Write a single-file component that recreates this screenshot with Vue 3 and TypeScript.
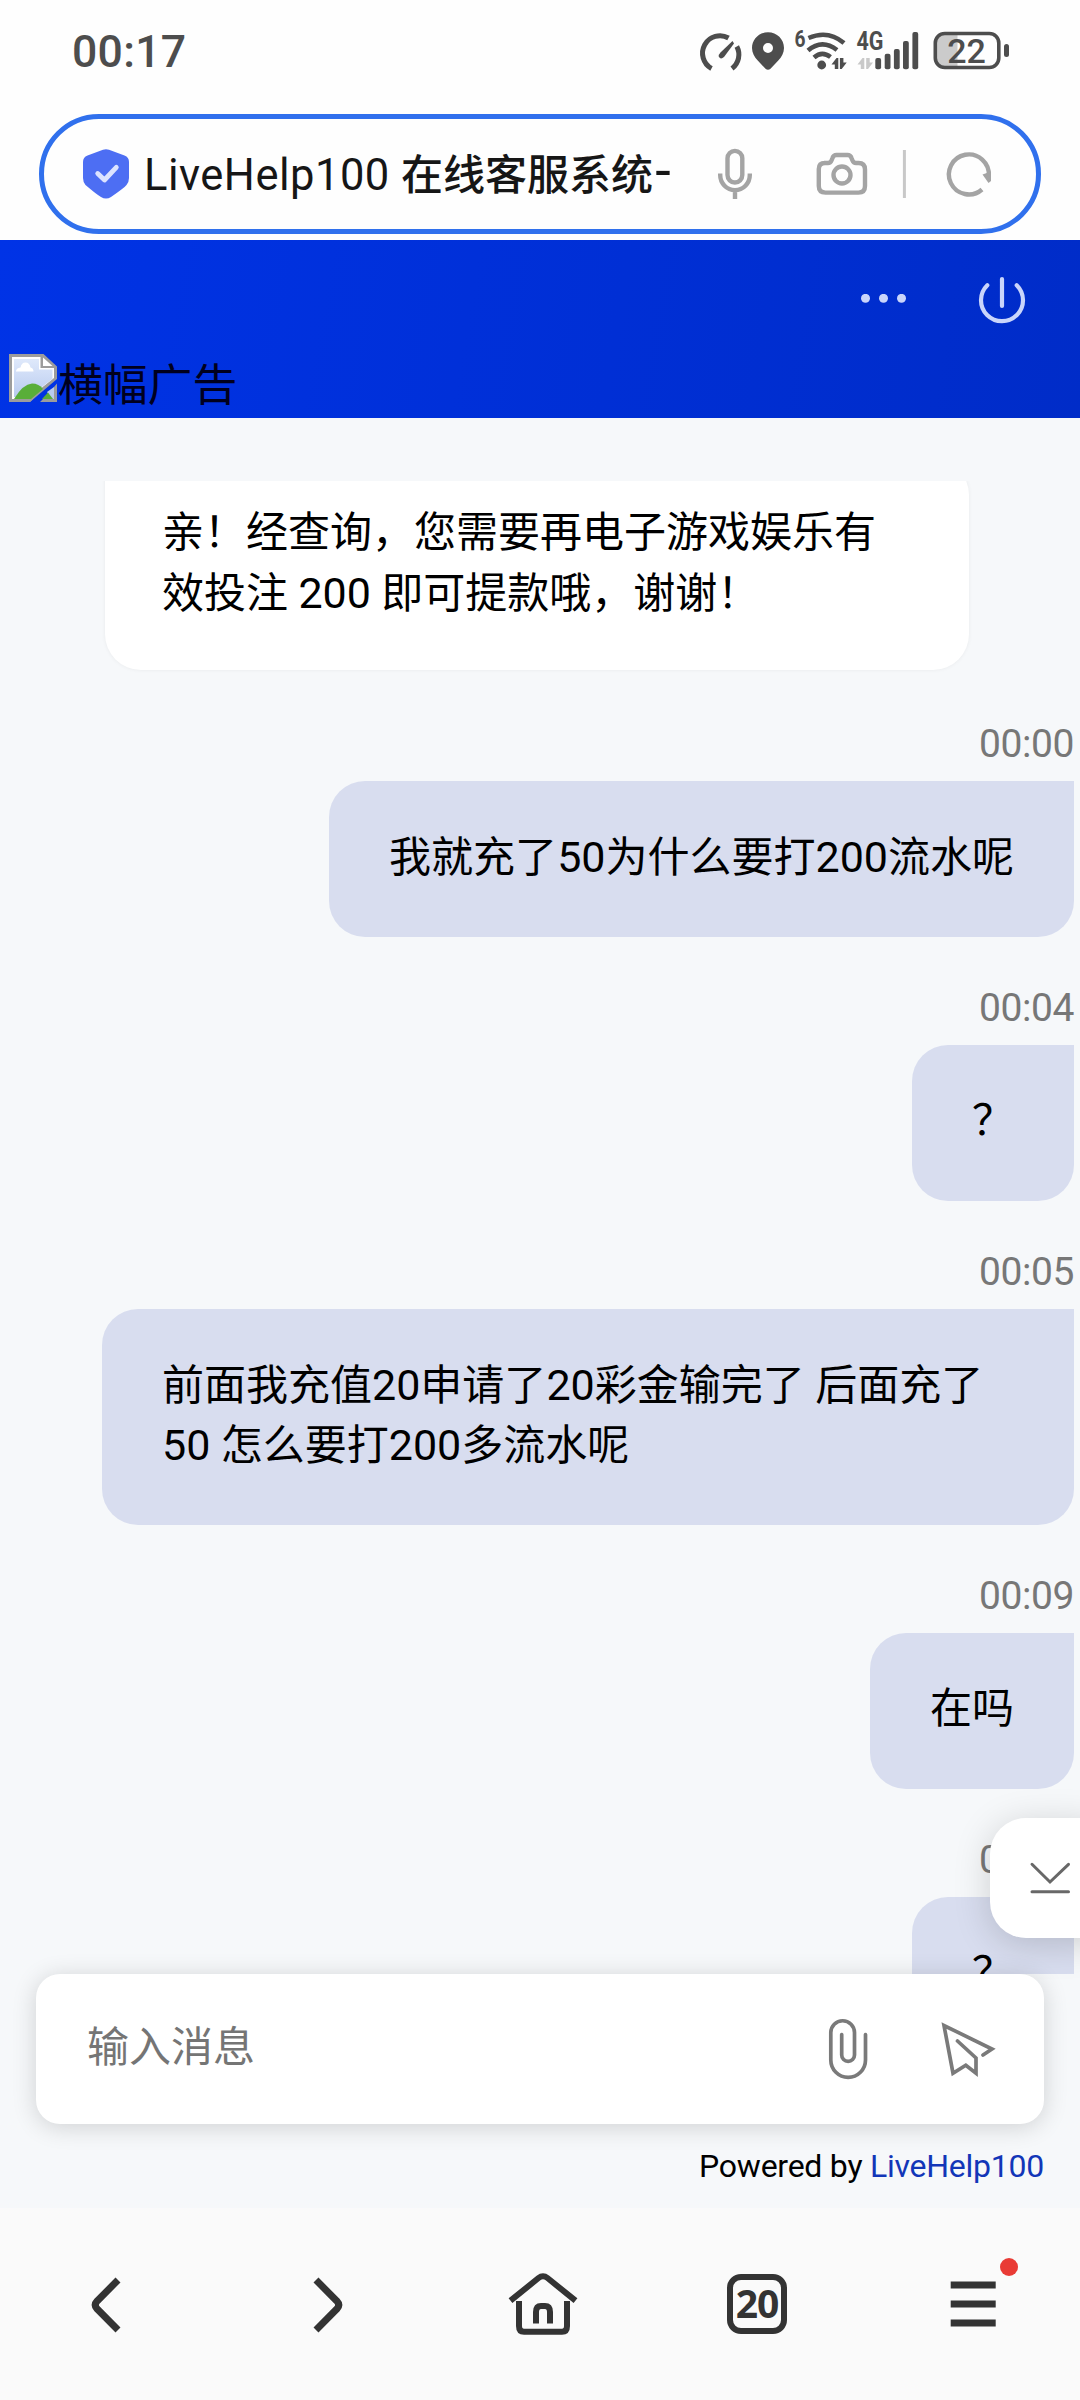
<script setup lang="ts">
interface Part {
  text: string
  latin?: boolean
}
interface Message {
  time?: string
  own: boolean
  lines: Part[][]
}

const split = (line: string): Part[] =>
  (line.match(/[0-9]+|[^0-9]+/g) ?? []).map((text) => ({ text, latin: /^[0-9]/.test(text) }))

const messages: Message[] = [
  { own: false, lines: ['亲！经查询，您需要再电子游戏娱乐有', '效投注 200 即可提款哦，谢谢！'].map(split) },
  { time: '00:00', own: true, lines: ['我就充了50为什么要打200流水呢'].map(split) },
  { time: '00:04', own: true, lines: ['？'].map(split) },
  { time: '00:05', own: true, lines: ['前面我充值20申请了20彩金输完了 后面充了', '50 怎么要打200多流水呢'].map(split) },
  { time: '00:09', own: true, lines: ['在吗'].map(split) },
  { time: '00:09', own: true, lines: ['？'].map(split) },
]
</script>

<template>
  <div class="screen">
    <div class="status">
      <span class="clock">00:17</span>
      <div class="status-icons">
        <svg width="48" height="48" viewBox="697 26 48 48" fill="none" stroke="#4d4d4d" stroke-width="5">
          <path d="M710.5 68.5A17.3 17.3 0 0 1 727.5 38" />
          <path d="M735.8 46.5A17.3 17.3 0 0 1 731 68.5" />
          <path d="M731.5 41 L733 43.5 L723 57 Q719.5 60 717.8 56.5 Q717.5 54.5 719.5 52.5 Z" fill="#4d4d4d" stroke="none" />
        </svg>
        <svg width="44" height="48" viewBox="746 26 44 48">
          <path fill="#4d4d4d" fill-rule="evenodd" d="M768 32.3c9 0 16 7 16 15.700c0 5-2.500 9-5.500 12.200l-8 8.600q-2.500 2-5 0l-8-8.600c-3-3.200-5.500-7.200-5.500-12.200c0-8.700 7-15.700 16-15.700zM768 43a5 5 0 1 0 0 10a5 5 0 1 0 0-10z" />
        </svg>
        <svg width="62" height="48" viewBox="790 26 62 48">
          <text x="794.500" y="46.500" class="tiny" textLength="11" lengthAdjust="spacingAndGlyphs" font-size="23">6</text>
          <g fill="none" stroke="#4d4d4d" stroke-width="4.600">
            <path d="M808.500 38Q828 29.500 844 43" />
            <path d="M808 50.500Q822 38.500 837 50" />
            <path d="M814 57.500Q822 50.500 830.500 57" />
          </g>
          <circle cx="821.700" cy="65" r="4.400" fill="#4d4d4d" />
          <path fill="#4d4d4d" d="M831.500 64.500l5-6.500h1.800v11h-3.500v-4.500zM846.700 62.500l-5 6.500h-1.800v-11h3.500v4.500z" />
        </svg>
        <svg width="78" height="48" viewBox="852 26 78 48" fill="#4d4d4d">
          <text x="856.500" y="50" class="tiny" textLength="27" lengthAdjust="spacingAndGlyphs" font-size="25">4G</text>
          <path fill="#c9c9c9" d="M857.500 64.500l5-6.500h1.800v11h-3.500v-4.500zM873 62.500l-5 6.500h-1.800v-11h3.500v4.500z" />
          <rect x="875.300" y="58" width="5.800" height="11.300" rx="2" />
          <rect x="884.700" y="53.700" width="5.800" height="15.600" rx="2" />
          <rect x="893.900" y="49" width="5.800" height="20.300" rx="2" />
          <rect x="903" y="41" width="5.800" height="28.300" rx="2" />
          <rect x="912.400" y="32" width="5.800" height="37.300" rx="2" />
        </svg>
        <svg width="84" height="48" viewBox="930 26 84 48">
          <path fill="#cbcbcb" d="M957.500 34h-12q-9 0-9 9v15q0 9 9 9h12z" />
          <rect x="935.300" y="33.500" width="63.500" height="34" rx="9.500" fill="none" stroke="#4d4d4d" stroke-width="3.600" />
          <rect x="1004" y="44" width="5" height="13" rx="2.500" fill="#4d4d4d" />
          <text x="966.500" y="62.500" text-anchor="middle" class="pct">22</text>
        </svg>
      </div>
    </div>

    <div class="address">
      <svg width="46" height="50" viewBox="0 0 46 50">
        <path fill="#4d6ef3" d="M20 .8q3-1.200 6 0L41.500 6.500Q46 8.300 46 13V29q0 4-2.500 7T28 48q-5 3-10 0T2.500 36Q0 33 0 29V13Q0 8.300 4.500 6.500Z" />
        <path d="M14.700 24.500L21.500 31L33.300 18.300" fill="none" stroke="#dce3ff" stroke-width="4.800" stroke-linecap="round" stroke-linejoin="round" />
      </svg>
      <div class="title"><span class="title-latin">LiveHelp100 </span>在线客服系统<span class="dash">-</span></div>
      <svg width="320" height="60" viewBox="700 144 320 60" fill="none" stroke="#a4a4a4" stroke-width="4.400">
        <rect x="727.500" y="150.900" width="14.800" height="31.600" rx="7.400" />
        <path d="M720.200 173.500V175A14.700 15 0 0 0 749.800 175V173.500M735 190V199" />
        <path d="M824 163H828Q830.500 163 831.500 160.500L832.500 158Q833.500 155 836.500 155H847.500Q850.500 155 851.500 158L852.500 160.500Q853.500 163 856 163H858.500Q865 163 865 169.500V186Q865 192.600 858.500 192.600H825.500Q818.800 192.600 818.800 186V169Q818.800 163 825 163Z" />
        <circle cx="842" cy="175" r="8.500" />
        <path d="M904.400 150V198" stroke="#c8c8c8" stroke-width="3" />
        <path d="M982 189.500A20 20 0 1 1 988.800 176" />
        <path d="M982.500 174.500L991 171.500V181L988.500 183Z" fill="#a4a4a4" stroke="none" />
      </svg>
    </div>

    <header class="banner">
      <div class="actions">
        <svg width="46" height="12" viewBox="0 0 46 12" fill="#c9d5fb">
          <circle v-for="n in 3" :key="n" :cx="n * 18 - 13.5" cy="4.300" r="4.500" />
        </svg>
        <svg width="48" height="50" viewBox="978 275 48 50" fill="none" stroke="#c9d5fb" stroke-width="4.200" stroke-linecap="round">
          <path d="M987.300 285.200A21 21 0 1 0 1016.700 285.200M1002 279V306" />
        </svg>
      </div>
      <div class="ad">
        <svg width="48" height="48" viewBox="0 0 48 48">
          <defs>
            <linearGradient id="sky" x1="0" y1="0" x2="0" y2="1">
              <stop offset="0" stop-color="#dfe9fb" />
              <stop offset="1" stop-color="#b9cbef" />
            </linearGradient>
          </defs>
          <path fill="#9c9c9c" d="M0 0H34.500L48 12.500V25L21 48H0Z" />
          <path fill="#fff" d="M3 3H31.500V14H45V24L18.500 45H3Z" />
          <path fill="url(#sky)" d="M5 5H30V15.500H43.500V25L19.500 43H5Z" />
          <path fill="#fff" d="M34 3.500L43.500 12H34ZM7 17.500q0-3.500 4.500-4q1-5 5-5t5 5q3 .5 3 4z" />
          <path fill="#59ae39" d="M5 45Q14 30 23 29.500Q30 29.500 34 35L22 45Z" />
          <path fill="#9c9c9c" d="M0 45H24L21 48H0ZM31 48L34 45H45V33L48 29.500V48Z" />
          <path fill="#b9cbef" d="M45 33V45H43L38 38Z" />
          <path fill="#59ae39" d="M39 38.500L44 45H33Z" />
        </svg>
        <span class="alt">横幅广告</span>
      </div>
    </header>

    <main class="chat">
      <div class="scroller">
        <div v-for="(m, i) in messages" :key="i" class="message" :class="{ own: m.own }">
          <div v-if="m.time" class="time">{{ m.time }}</div>
          <div class="bubble">
            <div v-for="(line, l) in m.lines" :key="l" class="line"><span v-for="(p, k) in line" :key="k" :class="{ num: p.latin }">{{ p.text }}</span></div>
          </div>
        </div>
      </div>
      <button class="to-bottom">
        <svg width="42" height="36" viewBox="1029 1860 42 36" fill="none" stroke="#686868" stroke-width="3" stroke-linecap="round">
          <path d="M1032 1864.300L1050 1882L1068.500 1864.300M1032 1891.800H1068.500" />
        </svg>
      </button>
    </main>

    <div class="composer">
      <span class="placeholder">输入消息</span>
      <svg width="42" height="64" viewBox="0 0 42 64" fill="none" stroke="#7a7a7a" stroke-width="3.700" stroke-linecap="round">
        <path d="M38.500 17.500V43A17.350 17.350 0 0 1 3.800 43V15.600A11.850 11.850 0 0 1 27.500 15.600V38A6.400 6.400 0 0 1 14.700 38V17.500" />
      </svg>
      <svg class="send" width="58" height="58" viewBox="0 0 58 58" fill="none" stroke="#7a7a7a" stroke-width="3.700" stroke-linecap="round">
        <path d="M44 35L53 29L5 5.500L14 53.200L26.800 45.200L37 53.200V38L18.500 21" />
      </svg>
    </div>
    <div class="powered">Powered by <span class="link">LiveHelp100</span></div>

    <nav class="toolbar">
      <div class="tool">
        <svg width="120" height="100" viewBox="48 54 120 100" fill="none" stroke="#333" stroke-width="7">
          <path d="M118 80L97 101.200Q93.500 105 97 108.800L118 130" />
        </svg>
      </div>
      <div class="tool">
        <svg width="120" height="100" viewBox="264 54 120 100" fill="none" stroke="#333" stroke-width="7">
          <path d="M316 80L337 101.200Q340.500 105 337 108.800L316 130" />
        </svg>
      </div>
      <div class="tool">
        <svg width="120" height="100" viewBox="480 54 120 100" fill="none" stroke="#333" stroke-width="6">
          <path d="M510.500 100.700L538.500 78Q543 74.500 547.500 78L575.500 100.700" />
          <path d="M519 101V126Q519 131.800 524 131.800H562Q567 131.800 567 126V101" />
          <path d="M536 123.500V112Q536 106 541 106H545Q550 106 550 112V123.500" />
        </svg>
      </div>
      <div class="tool"><div class="tabs">20</div></div>
      <div class="tool">
        <svg width="120" height="100" viewBox="912 54 120 100">
          <path d="M950.700 85H995.700M950.700 104H995.700M950.700 123H995.700" stroke="#333" stroke-width="7" />
          <circle cx="1009" cy="67" r="9" fill="#e93b35" />
        </svg>
      </div>
    </nav>
  </div>
</template>

<style>
body {
  margin: 0;
}
</style>

<style scoped>
.screen {
  width: 1080px;
  height: 2400px;
  display: flex;
  flex-direction: column;
  overflow: hidden;
  background: #f6f8fa;
  font-family: Roboto, "Noto Sans CJK SC", sans-serif;
  color: #000;
}
.status {
  height: 114px;
  flex: none;
  display: flex;
  justify-content: space-between;
  align-items: flex-start;
  padding: 26px 66px 0 72px;
  box-sizing: border-box;
  background: #fefefe;
}
.clock {
  font-size: 44.5px;
  line-height: 52px;
  font-weight: 500;
  letter-spacing: 0.3px;
  color: #4d4d4d;
}
.status-icons {
  display: flex;
}
.tiny {
  font-family: Roboto, sans-serif;
  font-weight: 700;
  fill: #4d4d4d;
}
.pct {
  font-family: Roboto, sans-serif;
  font-weight: 500;
  font-size: 34px;
  fill: #4d4d4d;
}
.address {
  height: 120px;
  flex: none;
  margin: 0 39px;
  box-sizing: border-box;
  border: 5px solid #3070ed;
  border-radius: 60px;
  display: flex;
  align-items: center;
  padding-left: 39px;
  background: #fefefe;
  box-shadow: 0 0 0 60px #fefefe;
  clip-path: inset(0 -39px -6px -39px);
}
.title {
  width: 556px;
  padding: 3px 0 0 15px;
  flex: none;
  white-space: nowrap;
  font-size: 42px;
  line-height: 60px;
  color: #161616;
  font-weight: 500;
}
.title-latin {
  font-size: 43.5px;
  font-weight: 450;
  letter-spacing: 0.5px;
}
.dash {
  margin-left: 2px;
  font-size: 56px;
  line-height: 40px;
  font-weight: 400;
}
.banner {
  height: 178px;
  flex: none;
  margin-top: 6px;
  display: flex;
  flex-direction: column;
  justify-content: space-between;
  padding: 35px 54px 6px 9px;
  box-sizing: border-box;
  background: linear-gradient(100deg, #0033e6, #002cc8);
}
.actions {
  display: flex;
  justify-content: flex-end;
  align-items: center;
  gap: 71px;
}
.ad {
  display: flex;
  align-items: center;
  height: 60px;
  gap: 1px;
}
.ad svg {
  margin-top: -8px;
}
.alt {
  font-family: "Noto Sans CJK SC", sans-serif;
  font-size: 44.8px;
  line-height: 60px;
  color: #00001e;
}
.chat {
  position: relative;
  height: 1556px;
  flex: none;
  padding-top: 63px;
  box-sizing: border-box;
}
.scroller {
  height: 1493px;
  overflow: hidden;
}
.message {
  display: flex;
  flex-direction: column;
  align-items: flex-start;
  padding-left: 105px;
}
.message:first-child {
  margin-top: -22px;
  padding-bottom: 3px;
}
.message.own {
  align-items: flex-end;
  padding: 41px 6px 0 0;
}
.bubble {
  width: 864px;
  box-sizing: border-box;
  padding: 44px 57px 47px;
  background: #fff;
  border-radius: 0 36px 36px 36px;
  box-shadow: 0 0 4px rgba(0, 0, 0, 0.06);
  font-size: 42px;
}
.own .bubble {
  width: auto;
  padding: 46px 60px 50px;
  background: #d8ddef;
  border-radius: 36px 0 36px 36px;
  box-shadow: none;
}
.own:nth-child(4) .bubble {
  width: 972px;
}
.line {
  height: 60px;
  line-height: 60px;
  white-space: nowrap;
}
.num {
  font-size: 43px;
}
.time {
  height: 60px;
  line-height: 60px;
  margin-bottom: 7px;
  font-size: 39px;
  letter-spacing: -0.4px;
  color: #777;
}
.to-bottom {
  position: absolute;
  right: -36px;
  top: 1400px;
  width: 126px;
  height: 120px;
  padding: 0 0 0 39px;
  border: 0;
  border-radius: 36px;
  background: #fff;
  box-shadow: 0 6px 36px rgba(0, 0, 0, 0.17);
  display: flex;
  align-items: center;
}
.composer {
  position: relative;
  height: 150px;
  flex: none;
  margin: 0 36px;
  padding: 0 47px 0 51px;
  box-sizing: border-box;
  display: flex;
  align-items: center;
  background: #fff;
  border-radius: 24px;
  box-shadow: 0 3px 24px rgba(0, 0, 0, 0.16);
}
.placeholder {
  flex: 1;
  font-size: 42px;
  line-height: 60px;
  margin-top: -3px;
  color: #757575;
}
.send {
  margin-left: 70px;
}
.powered {
  height: 84px;
  flex: none;
  padding-right: 36px;
  line-height: 85px;
  text-align: right;
  font-size: 32px;
  letter-spacing: -0.25px;
}
.link {
  color: #1236b8;
}
.toolbar {
  height: 192px;
  flex: none;
  display: grid;
  grid-template-columns: repeat(5, 1fr);
  background: #fafafa;
}
.tool {
  display: flex;
  align-items: center;
  justify-content: center;
}
.tabs {
  width: 60px;
  height: 60px;
  box-sizing: border-box;
  border: 6px solid #333;
  border-radius: 14px;
  margin-left: 2px;
  font: 700 39px/46px "Open Sans", sans-serif;
  letter-spacing: -1px;
  text-align: center;
  color: #333;
}
</style>
